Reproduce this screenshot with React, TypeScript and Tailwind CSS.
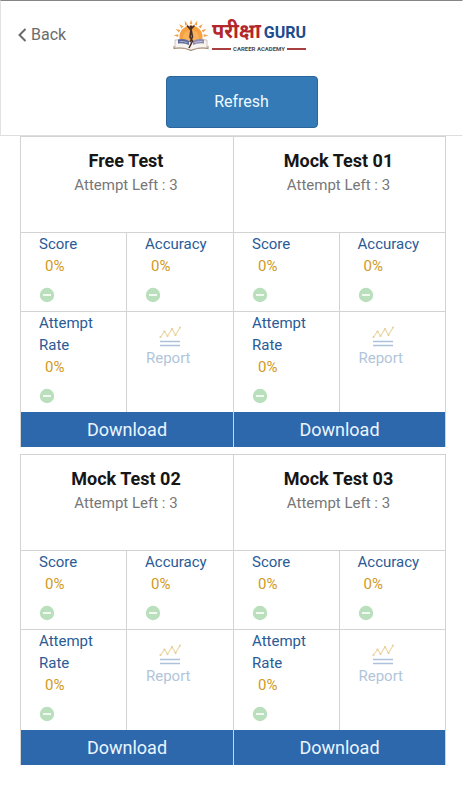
type Test = {
  title: string;
  attempts: number;
  score: number;
  accuracy: number;
  attemptRate: number;
};

const tests: Test[] = [
  { title: "Free Test", attempts: 3, score: 0, accuracy: 0, attemptRate: 0 },
  { title: "Mock Test 01", attempts: 3, score: 0, accuracy: 0, attemptRate: 0 },
  { title: "Mock Test 02", attempts: 3, score: 0, accuracy: 0, attemptRate: 0 },
  { title: "Mock Test 03", attempts: 3, score: 0, accuracy: 0, attemptRate: 0 },
];

const rays = [-84, -63, -42, -21, 0, 21, 42, 63, 84];

function LogoMark() {
  return (
    <svg className="h-8 w-9" viewBox="0 0 36 32" aria-hidden="true">
      {rays.map((angle) => (
        <path
          key={angle}
          d="M16.6 5.2 18 0.5 19.4 5.2z"
          fill="#f2a04a"
          transform={`rotate(${angle} 18 18)`}
        />
      ))}
      <path d="M6.5 22v-4a11.5 11.5 0 0 1 23 0v4z" fill="#f6a03f" />
      <path d="M10 22v-3a8 8 0 0 1 16 0v3z" fill="#f9b25a" />
      <path
        d="M2 21q8-2 16 2q8-4 16-2v8q-8-1.5-16 2q-8-3.5-16-2z"
        fill="#f7f3ee"
        stroke="#b3a5a0"
        strokeWidth="0.6"
      />
      <path d="M1 27v2.5q9-1.5 17 2q8-3.5 17-2V27" fill="none" stroke="#a98a70" strokeWidth="1.1" />
      <path d="M5 20.5q6-1.5 11 1.5v4q-5-2.5-11-1.5z" fill="#5b6799" />
      <path d="M31 20.5q-6-1.5-11 1.5v4q5-2.5 11-1.5z" fill="#8d89b3" />
      <path
        d="M6.5 22.5q4-0.5 8 1.2M29.5 22.5q-4-0.5-8 1.2"
        fill="none"
        stroke="#e6e3ee"
        strokeWidth="0.6"
      />
      <path
        d="M14 6.5 17.5 10.5 21.5 6.5M18 10l-1 8 2.5 4-3.5 7M18 10l1.5 8-2.5 5"
        fill="none"
        stroke="#4a2f28"
        strokeWidth="1.6"
      />
      <circle cx="18" cy="8" r="1.4" fill="#4a2f28" />
    </svg>
  );
}

function Logo() {
  return (
    <div className="flex items-center gap-[3px]">
      <LogoMark />
      <div className="flex flex-col pt-1">
        <div className="flex items-center gap-[3px] whitespace-nowrap font-bold">
          <span className="font-['Noto_Sans_Devanagari','Noto_Sans',sans-serif] text-xl leading-6 text-[#b3262b]">
            परीक्षा
          </span>
          <span className="font-['Roboto',sans-serif] text-base leading-6 text-[#1c4b8f]">
            GURU
          </span>
        </div>
        <div className="flex items-center gap-0.5">
          <span className="h-0.5 flex-1 bg-[#a8403f]" />
          <span className="whitespace-nowrap text-[6px] font-bold leading-2 text-[#4c4c4c]">
            CAREER ACADEMY
          </span>
          <span className="h-0.5 flex-1 bg-[#a8403f]" />
        </div>
      </div>
    </div>
  );
}

function MinusIcon() {
  return (
    <svg className="mt-2.5 size-4" viewBox="0 0 16 16" aria-hidden="true">
      <circle cx="8" cy="8" r="7.2" fill="#b9dfbc" />
      <path d="M4 8h8" stroke="#fff" strokeWidth="1.6" />
    </svg>
  );
}

function ReportIcon() {
  return (
    <svg className="ml-1 h-[22px] w-[22px]" viewBox="0 0 22 22" aria-hidden="true">
      <path
        d="M1.5 12 5.5 6.5 8.5 11 13 4 16.5 10 21 2.5"
        fill="none"
        stroke="#ecd9a8"
        strokeWidth="1.2"
      />
      <g fill="#e6cf98">
        <circle cx="1.5" cy="12" r="1.1" />
        <circle cx="5.5" cy="6.5" r="1.1" />
        <circle cx="8.5" cy="11" r="1.1" />
        <circle cx="13" cy="4" r="1.1" />
        <circle cx="16.5" cy="10" r="1.1" />
        <circle cx="21" cy="2.5" r="1" />
      </g>
      <path d="M1 16.5h20M1 20.5h20" stroke="#abc2da" strokeWidth="1.7" />
    </svg>
  );
}

function Stat({ label, value }: { label: string; value: number }) {
  return (
    <div className="pl-[18px] text-[15px] leading-[22px]">
      <dt className="text-[#2a5b96]">{label}</dt>
      <dd>
        <span className="block pl-[6px] text-[#d19a1e]">{value}%</span>
        <MinusIcon />
      </dd>
    </div>
  );
}

function TestCard({ test }: { test: Test }) {
  return (
    <article className="border-t border-l border-[#d3d3d3] even:border-r">
      <div className="h-24 border-b border-[#d3d3d3] pt-3 pr-0.5 text-center">
        <h2 className="text-lg font-bold leading-6 text-[#161616]">{test.title}</h2>
        <p className="text-[15px] leading-6 text-[#777]">Attempt Left : {test.attempts}</p>
      </div>
      <div className="grid grid-cols-2">
        <dl className="h-[79px] border-r border-b border-[#d3d3d3]">
          <Stat label="Score" value={test.score} />
        </dl>
        <dl className="h-[79px] border-b border-[#d3d3d3]">
          <Stat label="Accuracy" value={test.accuracy} />
        </dl>
        <dl className="h-[100px] border-r border-[#d3d3d3] pr-6">
          <Stat label="Attempt Rate" value={test.attemptRate} />
        </dl>
        <div className="pt-[13px] pl-[19px]">
          <button
            type="button"
            disabled
            className="flex flex-col items-center text-[15px] leading-[22px] text-[#b1c5da]"
          >
            <ReportIcon />
            Report
          </button>
        </div>
      </div>
      <button type="button" className="block h-[35px] w-full bg-[#2d68ad] text-lg text-[#eaf5ff]">
        Download
      </button>
    </article>
  );
}

export default function App() {
  return (
    <main className="min-h-screen bg-white font-['Roboto',sans-serif] text-base">
      <header className="border border-t-[#858585] border-r-transparent border-b-[#dedede] border-l-[#e2e2e2] pb-[7px]">
        <div className="grid grid-cols-[1fr_auto_1fr] items-center pt-4 pl-4">
          <a href="#" className="flex items-center gap-1 text-[#6b6b6b]">
            <svg className="h-[14px] w-[10px]" viewBox="0 0 10 14" aria-hidden="true">
              <path d="M8.5 1 2.5 7l6 6" fill="none" stroke="currentColor" strokeWidth="2" />
            </svg>
            Back
          </a>
          <Logo />
        </div>
        <div className="flex justify-center pt-[23px] pl-5">
          <button
            type="button"
            className="h-[52px] w-[152px] rounded-[4px] border border-[#2b659b] bg-[#337ab7] text-[#eff9ff]"
          >
            Refresh
          </button>
        </div>
      </header>
      <div className="grid grid-cols-2 gap-y-[7px] pr-[17px] pl-5">
        {tests.map((test) => (
          <TestCard key={test.title} test={test} />
        ))}
      </div>
    </main>
  );
}
